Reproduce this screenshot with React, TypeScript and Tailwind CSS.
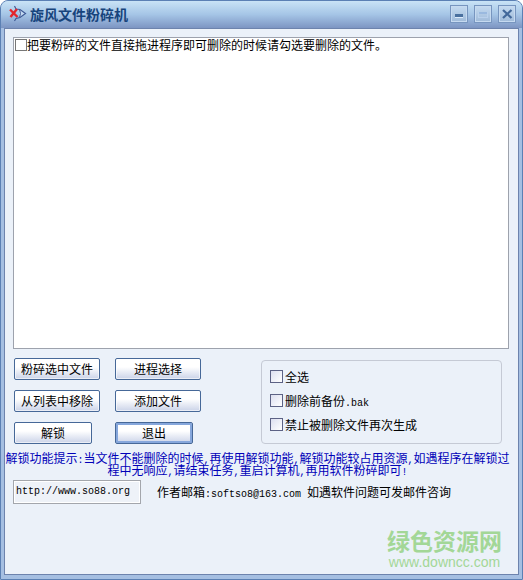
import { useState } from "react";

const hint =
  "解锁功能提示:当文件不能删除的时候,再使用解锁功能,解锁功能较占用资源,如遇程序在解锁过程中无响应,请结束任务,重启计算机,再用软件粉碎即可!";

const buttons = [
  { label: "粉碎选中文件", width: "w-[86px]" },
  { label: "进程选择", width: "w-[86px]" },
  { label: "从列表中移除", width: "w-[86px]" },
  { label: "添加文件", width: "w-[86px]" },
  { label: "解锁", width: "w-[78px]" },
  { label: "退出", width: "w-[78px]", active: true },
];

const options = ["全选", "删除前备份.bak", "禁止被删除文件再次生成"];

// ASCII runs are half the width of a Chinese character
function Mixed({ text }: { text: string }) {
  return (
    <>
      {text.split(/([\x20-\x7e]+)/).map((part, i) =>
        i % 2 ? (
          <span key={i} className="font-['Liberation_Mono',monospace] text-[10px] leading-[6px]">
            {part}
          </span>
        ) : (
          part
        )
      )}
    </>
  );
}

function AppIcon() {
  return (
    <svg width="18" height="18" viewBox="0 0 18 18" fill="none">
      <path d="M10.5 4.5 L16.5 8.5 L10.5 12.5 Z" fill="#c3d9f1" />
      <path d="M5.5 1 L7 4 L11 4.5 L16.5 8.5 L11 12.5 L7 13.5 L5.5 16" stroke="#3f5a96" strokeWidth="1.2" />
      <path d="M10.5 4.5 Q12.5 8.5 10.5 12.5" stroke="#3f5a96" />
      <path d="M1 4.5 L8.5 12 M8 4 L1.5 12" stroke="#e3262d" strokeWidth="2.4" />
    </svg>
  );
}

function CaptionButton({ label, children }: { label: string; children: React.ReactNode }) {
  return (
    <button
      aria-label={label}
      className="flex size-[18px] items-center justify-center border border-[#7795bf] bg-linear-to-b from-[#c4daf0] to-[#9fbad9] inset-ring inset-ring-[#c6daf0]"
    >
      {children}
    </button>
  );
}

export default function App() {
  const [checked, setChecked] = useState<Record<string, boolean>>({});
  const [url, setUrl] = useState("http://www.so88.org");

  const toggle = (name: string) => setChecked((c) => ({ ...c, [name]: !c[name] }));

  return (
    <div className="flex min-h-screen flex-col overflow-hidden rounded-t-lg border border-[#5b80b4] bg-[#a5bfe2] font-['Noto_Sans_CJK_SC',sans-serif] text-xs leading-3 text-black">
      {/* Title bar */}
      <header className="flex h-[27px] items-center justify-between bg-linear-to-b from-[#c9e3f6] via-[#a5c5e6] to-[#7d95c3] pr-1.5 pb-0.5 pl-2">
        <div className="flex items-center gap-[3px]">
          <AppIcon />
          <h1 className="text-sm leading-4 font-bold text-[#17447c]">旋风文件粉碎机</h1>
        </div>
        <div className="flex gap-1.5">
          <CaptionButton label="最小化">
            <svg width="12" height="12" viewBox="0 0 12 12">
              <rect x="2" y="6" width="8" height="3" fill="#4a709f" />
              <path d="M2 9.5h8" stroke="#dceafa" />
            </svg>
          </CaptionButton>
          <CaptionButton label="最大化">
            <svg width="12" height="12" viewBox="0 0 12 12" fill="none">
              <rect x="1.5" y="4.5" width="9" height="5" stroke="#b9d0ec" />
              <path d="M2 5h8" stroke="#9ab9df" strokeWidth="2" />
            </svg>
          </CaptionButton>
          <CaptionButton label="关闭">
            <svg width="12" height="12" viewBox="0 0 12 12" fill="none">
              <path d="M2 2 L10.5 10 M10.5 2 L2 10" stroke="#42689a" strokeWidth="2.2" />
            </svg>
          </CaptionButton>
        </div>
      </header>

      {/* Client area */}
      <main className="mx-[3px] mb-1 flex flex-1 flex-col border border-[#6d83ad] bg-[#ebf1f9] pt-2">
        <ul className="mr-[9px] ml-2 flex-1 border border-[#9da2ad] bg-white p-px">
          <li>
            <label className="flex items-center">
              <input
                type="checkbox"
                checked={!!checked.tip}
                onChange={() => toggle("tip")}
                className="size-3 shrink-0 appearance-none border border-[#777] bg-white checked:bg-[#5b7fb8]"
              />
              把要粉碎的文件直接拖进程序即可删除的时候请勾选要删除的文件。
            </label>
          </li>
        </ul>

        <div className="mt-[9px] mr-4 ml-[9px] flex items-start">
          <div className="grid grid-cols-[86px_86px] gap-x-[15px] gap-y-2.5">
            {buttons.map((b) => (
              <button
                key={b.label}
                className={`${b.width} h-[22px] rounded-xs border border-[#466898] bg-linear-to-b from-white from-40% to-[#cbd3e8] ${
                  b.active ? "inset-ring-2 inset-ring-[#86a7dc]" : "inset-ring inset-ring-white/60"
                }`}
              >
                {b.label}
              </button>
            ))}
          </div>

          <fieldset className="mt-0.5 ml-15 flex flex-1 flex-col gap-[11px] rounded border border-[#c5cad5] px-2 pt-[9px] pb-3">
            {options.map((name) => (
              <label key={name} className="flex items-center gap-0.5">
                <input
                  type="checkbox"
                  checked={!!checked[name]}
                  onChange={() => toggle(name)}
                  className="size-[13px] shrink-0 appearance-none border border-[#5c6285] bg-linear-to-br from-[#dcdff0] to-white checked:bg-[#5b7fb8] checked:bg-none"
                />
                <span>
                  <Mixed text={name} />
                </span>
              </label>
            ))}
          </fieldset>
        </div>

        <p className="mt-2 mr-2 text-center text-[#0000b8]">
          <Mixed text={hint} />
        </p>

        <div className="mt-1 ml-2 flex items-center gap-4">
          <input
            aria-label="网址"
            value={url}
            onChange={(e) => setUrl(e.target.value)}
            className="h-6 w-32 border border-[#a3a6ac] bg-[#eef2f8] px-0.5 pb-0.5 font-['Liberation_Mono',monospace] text-[10px] inset-ring inset-ring-white"
          />
          <p>
            <Mixed text="作者邮箱:softso8@163.com 如遇软件问题可发邮件咨询" />
          </p>
        </div>

        <footer className="mt-6 mr-4 mb-1 flex flex-col items-end text-[#a3d797]">
          <div className="flex flex-col items-center gap-0.5">
            <span className="text-[23px] leading-6 font-bold">绿色资源网</span>
            <a href="#" className="font-['Liberation_Sans',sans-serif] text-sm leading-4">
              www.downcc.com
            </a>
          </div>
        </footer>
      </main>
    </div>
  );
}
